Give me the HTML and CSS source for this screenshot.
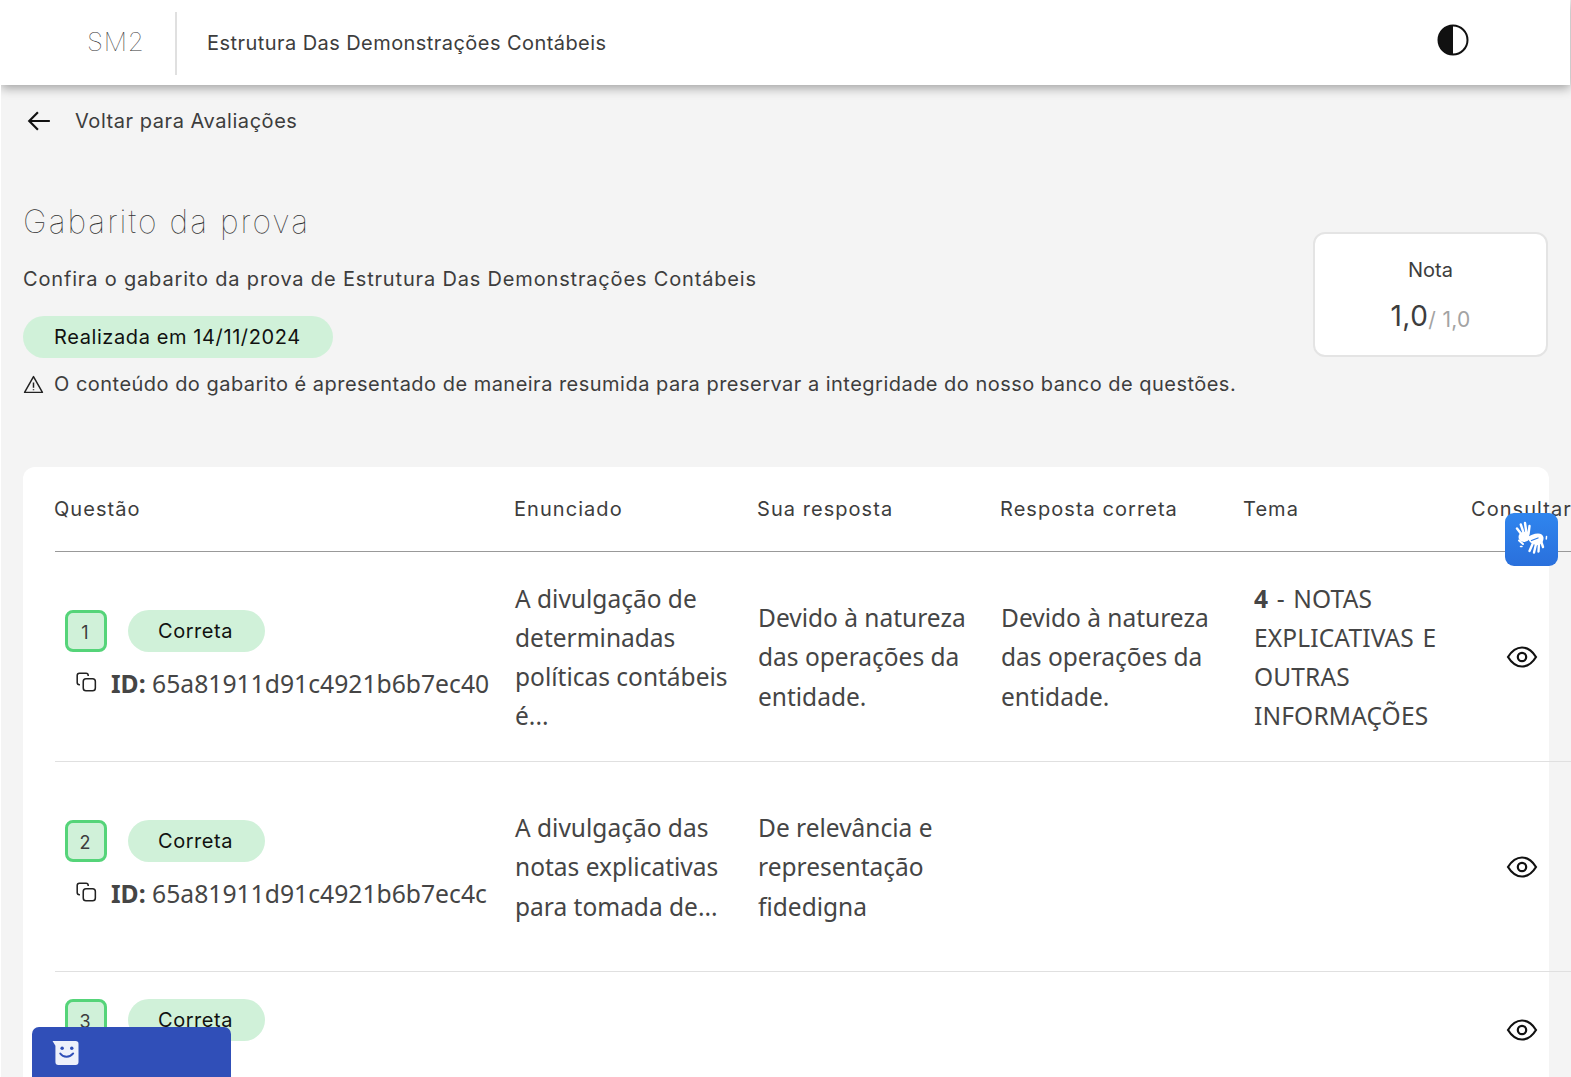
FILE: index.html
```html
<!DOCTYPE html>
<html lang="pt-BR">
<head>
<meta charset="utf-8">
<title>Gabarito da prova</title>
<link rel="stylesheet" href="styles.css">
</head>
<body>
<div class="page">
  <header class="topbar">
    <div class="logo">SM2</div>
    <div class="course">Estrutura Das Demonstrações Contábeis</div>
    <svg class="contrast" viewBox="0 0 32 32"><circle cx="16" cy="16" r="14.5" fill="#fff" stroke="#111" stroke-width="2"/><path d="M16 1.5a14.500 14.500 0 0 0 0 29z" fill="#111"/></svg>
  </header>
  <main class="content">
    <a class="back">
      <svg class="back-icon" viewBox="0 0 24 24" fill="none" stroke="#111" stroke-width="2"><path d="M22 12H3M11 4l-8 8 8 8"/></svg>
      <span>Voltar para Avaliações</span>
    </a>
    <section class="summary">
      <div class="summary-text">
        <h1>Gabarito da prova</h1>
        <p class="subtitle">Confira o gabarito da prova de Estrutura Das Demonstrações Contábeis</p>
        <span class="chip chip-date">Realizada em 14/11/2024</span>
        <p class="notice">
          <svg class="warn" viewBox="0 0 20 20" fill="none" stroke="#222" stroke-width="1.400"><path d="M10 2.500 18.500 17.500H1.500z" stroke-linejoin="round"/><path d="M10 8v5M10 14.500v1"/></svg>
          <span>O conteúdo do gabarito é apresentado de maneira resumida para preservar a integridade do nosso banco de questões.</span>
        </p>
      </div>
      <aside class="grade">
        <div class="grade-label">Nota</div>
        <div class="grade-value">1,0<small>/ 1,0</small></div>
      </aside>
    </section>
    <section class="table">
      <div class="row head">
        <div class="cell first">Questão</div>
        <div class="cell">Enunciado</div>
        <div class="cell">Sua resposta</div>
        <div class="cell">Resposta correta</div>
        <div class="cell">Tema</div>
        <div class="cell">Consultar</div>
      </div>
      <div class="row item">
        <div class="q">
          <div class="q-top"><span class="num">1</span><span class="chip chip-ok">Correta</span></div>
          <div class="q-id"><svg class="copy" viewBox="0 0 20 20" fill="none" stroke="#222" stroke-width="1.400"><rect x="7.500" y="7" width="11" height="11" rx="2.500"/><path d="M4.500 12.500H4a2 2 0 0 1-2-2V4a2 2 0 0 1 2-2h6a2 2 0 0 1 2 2v.5"/></svg><span><b>ID:</b> 65a81911d91c4921b6b7ec40</span></div>
        </div>
        <div class="text">A divulgação de determinadas políticas contábeis é...</div>
        <div class="text">Devido à natureza das operações da entidade.</div>
        <div class="text">Devido à natureza das operações da entidade.</div>
        <div class="text theme"><b>4</b> - NOTAS EXPLICATIVAS E OUTRAS INFORMAÇÕES</div>
        <div class="view"><svg class="eye" viewBox="0 0 32 24" fill="none" stroke="#111" stroke-width="2.200"><path d="M2 12C6 5.500 10.500 2.500 16 2.500S26 5.500 30 12c-4 6.500-8.500 9.500-14 9.500S6 18.500 2 12z"/><circle cx="16" cy="12" r="4.200"/></svg></div>
      </div>
      <div class="row item">
        <div class="q">
          <div class="q-top"><span class="num">2</span><span class="chip chip-ok">Correta</span></div>
          <div class="q-id"><svg class="copy" viewBox="0 0 20 20" fill="none" stroke="#222" stroke-width="1.400"><rect x="7.500" y="7" width="11" height="11" rx="2.500"/><path d="M4.500 12.500H4a2 2 0 0 1-2-2V4a2 2 0 0 1 2-2h6a2 2 0 0 1 2 2v.5"/></svg><span><b>ID:</b> 65a81911d91c4921b6b7ec4c</span></div>
        </div>
        <div class="text">A divulgação das notas explicativas para tomada de...</div>
        <div class="text">De relevância e representação fidedigna</div>
        <div class="text"></div>
        <div class="text theme"></div>
        <div class="view"><svg class="eye" viewBox="0 0 32 24" fill="none" stroke="#111" stroke-width="2.200"><path d="M2 12C6 5.500 10.500 2.500 16 2.500S26 5.500 30 12c-4 6.500-8.500 9.500-14 9.500S6 18.500 2 12z"/><circle cx="16" cy="12" r="4.200"/></svg></div>
      </div>
      <div class="row item last">
        <div class="q">
          <div class="q-top"><span class="num">3</span><span class="chip chip-ok">Correta</span></div>
        </div>
        <div class="text"></div>
        <div class="text"></div>
        <div class="text"></div>
        <div class="text theme"></div>
        <div class="view"><svg class="eye" viewBox="0 0 32 24" fill="none" stroke="#111" stroke-width="2.200"><path d="M2 12C6 5.500 10.500 2.500 16 2.500S26 5.500 30 12c-4 6.500-8.500 9.500-14 9.500S6 18.500 2 12z"/><circle cx="16" cy="12" r="4.200"/></svg></div>
      </div>
    </section>
  </main>
  <div class="vlibras">
    <svg viewBox="0 0 53 53">
      <g fill="none" stroke="#fff" stroke-linecap="round">
        <g stroke-width="2.400">
          <path d="M12 15.500 17 22M15.800 11.500 19 21M20 10 21.500 20.500M24.500 13 23.500 21"/>
        </g>
        <ellipse cx="19" cy="24" rx="5.500" ry="5" fill="#fff" stroke="none"/>
        <path d="M14 27.500 18 31" stroke-width="2"/>
        <path d="M15.500 33.500h1.500" stroke-width="1.500"/>
      </g>
      <path d="M22 25c3-3 7-4.500 11-4.500 3 0 5 1.500 5.500 4 .3 2.500-1 5-3 6.500l-4 1.500-6-3-3.500-4.500z" fill="#fff"/>
      <path d="M26.500 27.500 33 25" fill="none" stroke="#2d7ce6" stroke-width="1.300" stroke-linecap="round"/>
      <g fill="none" stroke="#fff" stroke-width="2.400" stroke-linecap="round">
        <path d="M28 30 24.500 38M31 31 29 39.500M34 31 33.500 38.500M36.500 29.500 38 34"/>
        <path d="M41.500 23.500 41.300 26" stroke-width="1.500"/>
      </g>
    </svg>
  </div>
  <div class="chat">
    <svg class="chat-icon" viewBox="0 0 28 26"><path d="M0 1h24a3 3 0 0 1 3 3v19a3 3 0 0 1-3 3H6a3 3 0 0 1-3-3V6z" fill="#eef1fb"/><circle cx="10" cy="8.500" r="1.800" fill="#304fb8"/><circle cx="20" cy="8.500" r="1.800" fill="#304fb8"/><path d="M8 14c3 4.500 10 4.500 13.500 0" fill="none" stroke="#304fb8" stroke-width="2" stroke-linecap="round"/></svg>
  </div>
</div>
</body>
</html>
```
FILE: styles.css
```css
* { box-sizing: border-box; }
html, body { margin: 0; padding: 0; height: 100%; overflow: hidden; background: #fff; }
body { font-family: Inter, "Noto Sans", sans-serif; color: #3d3d3d; }
.page { position: relative; height: 1077px; margin-left: 1px; background: #f4f4f4; overflow: hidden; }
.topbar { position: relative; z-index: 2; display: flex; align-items: center; height: 85px; margin-right: 1px; background: #fff; box-shadow: 0 3px 10px rgba(0,0,0,.35); }
.logo { width: 175px; padding-left: 86px; padding-bottom: 2px; font-size: 26px; font-weight: 100; color: #333; letter-spacing: .8px; }
.course { height: 63px; margin-top: 1px; margin-left: -1px; padding-left: 30px; border-left: 2px solid #e0e0e0; font-size: 20px; line-height: 62px; letter-spacing: .44px; color: #3d3d3d; white-space: nowrap; }
.contrast { width: 32px; height: 32px; margin-left: auto; margin-right: 101px; margin-top: -5px; }
.content { padding: 0 0 0 22px; }
.back { display: flex; align-items: center; height: 24px; margin-top: 24px; font-size: 20px; letter-spacing: .55px; color: #3d3d3d; }
.back-icon { width: 26px; height: 26px; margin-right: 23px; margin-left: 3px; }
.summary { display: flex; justify-content: space-between; margin-right: 23px; margin-top: 70px; }
h1 { margin: 0; font-size: 32px; line-height: 38px; font-weight: 100; letter-spacing: 2px; color: #333; }
.subtitle { margin: 24px 0 0; font-size: 20px; line-height: 28px; letter-spacing: .83px; color: #3d3d3d; }
.chip { display: inline-flex; align-items: center; background: #d0f1d9; color: #111; border-radius: 21px; height: 42px; font-size: 20px; letter-spacing: .55px; }
.chip-date { margin-top: 23px; padding: 0 32px 0 31px; letter-spacing: .6px; }
.notice { display: flex; align-items: center; margin: 12px 0 0; font-size: 20px; line-height: 28px; letter-spacing: .48px; color: #3d3d3d; white-space: nowrap; }
.warn { width: 21px; height: 21px; margin-right: 10px; }
.grade { width: 235px; height: 125px; margin-top: 29px; background: #fff; border: 2px solid #e4e4e4; border-radius: 12px; text-align: center; }
.grade-label { margin-top: 23px; font-size: 20px; line-height: 26px; }
.grade-value { margin-top: 16px; font-size: 28px; line-height: 34px; letter-spacing: .5px; }
.grade-value small { position: relative; top: 1px; font-size: 21px; color: #a3a3a3; letter-spacing: .3px; }
.table { width: 1526px; margin-top: 69px; padding-left: 32px; background: #fff; border-radius: 12px 12px 0 0; height: 620px; }
.row { display: grid; grid-template-columns: 459px 243px 243px 243px 228px 120px; width: 1560px; }
.head { align-items: center; height: 85px; border-bottom: 1px solid #999; font-size: 20px; letter-spacing: 1.050px; color: #3d3d3d; }
.first { margin-left: -1px; }
.item { align-items: center; height: 210px; border-bottom: 1px solid #e0e0e0; }
.item.last { height: 120px; border-bottom: 0; align-items: start; }
.text { font-family: "Noto Sans", sans-serif; font-size: 24.500px; line-height: 39.200px; color: #454545; padding: 1px 14px 0 1px; }
.theme { padding-left: 11px; padding-right: 20px; word-spacing: 2px; letter-spacing: .15px; }
.q { padding-left: 10px; }
.q-top { display: flex; align-items: center; gap: 21px; }
.num { display: flex; align-items: center; justify-content: center; width: 42px; height: 42px; padding: 3px 2px 0 0; background: #d0f1d9; border: 3px solid #55d479; border-radius: 8px; font-size: 18px; }
.chip-ok { justify-content: center; width: 137px; padding-right: 2px; }
.q-id { display: flex; align-items: center; margin-top: 12px; margin-left: 10px; font-family: "Noto Sans", sans-serif; font-size: 24.700px; line-height: 40px; color: #454545; white-space: nowrap; }
.copy { width: 22px; height: 22px; margin-right: 14px; margin-top: -4px; }
.view { padding-left: 35px; display: flex; }
.last .view { padding-top: 46px; }
.last .q { padding-top: 27px; }
.eye { width: 32px; height: 24px; }
.vlibras { position: absolute; left: 1504px; top: 513px; width: 53px; height: 53px; background: linear-gradient(#2f85ee, #2a70dc); border-radius: 9px; z-index: 5; }
.vlibras svg { display: block; width: 53px; height: 53px; }
.chat { position: absolute; left: 31px; top: 1027px; width: 199px; height: 50px; padding: 13px 0 0 20px; background: #304fb8; border-radius: 7px 7px 0 0; z-index: 5; }
.chat-icon { width: 28px; height: 25px; display: block; }
```
